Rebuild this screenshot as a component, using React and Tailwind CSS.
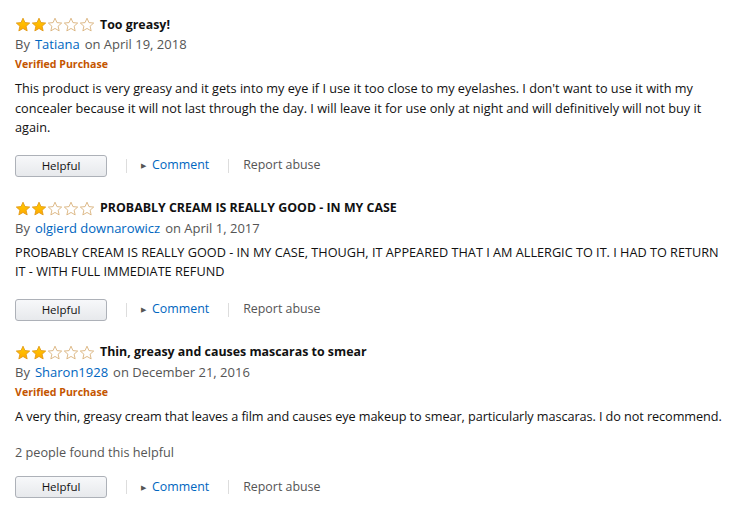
import React from "react";

function Star({ filled }) {
  const d = "M8 1.2 L9.95 5.6 L14.7 6.05 L11.1 9.2 L12.15 13.9 L8 11.45 L3.85 13.9 L4.9 9.2 L1.3 6.05 L6.05 5.6 Z";
  return (
    <svg width="16" height="16" viewBox="0 0 16 16" className="block">
      <defs>
        <linearGradient id="sg" x1="0" y1="0" x2="0" y2="1">
          <stop offset="0" stopColor="#ffce00" />
          <stop offset="1" stopColor="#ffa700" />
        </linearGradient>
      </defs>
      {filled ? (
        <path d={d} fill="url(#sg)" stroke="#e29a17" strokeWidth="0.9" strokeLinejoin="round" />
      ) : (
        <path d={d} fill="#fff" stroke="#d9b27c" strokeWidth="0.9" strokeLinejoin="round" />
      )}
    </svg>
  );
}

function Stars() {
  return (
    <div className="flex">
      {[1, 2, 3, 4, 5].map((i) => (
        <Star key={i} filled={i <= 2} />
      ))}
    </div>
  );
}

function Actions() {
  return (
    <div className="flex items-center h-[22px] text-[12.4px]">
      <button className="w-[92px] h-[22px] rounded-[3px] border border-[#adb1b8] bg-gradient-to-b from-[#f7f8fa] to-[#e7e9ec] text-[11.5px] text-[#111] flex items-center justify-center">
        Helpful
      </button>
      <div className="w-px h-[14px] bg-[#ddd] ml-[19px]" />
      <span className="ml-[14px] text-[#555] text-[7px] leading-none">&#9654;</span>
      <span className="ml-[6px] text-[#0066c0]">Comment</span>
      <div className="w-px h-[14px] bg-[#ddd] ml-[19px]" />
      <span className="ml-[14px] text-[#555]">Report abuse</span>
    </div>
  );
}

function Review({ title, author, date, verified, body, helpful, tight }) {
  return (
    <div>
      <div className="flex items-center h-5">
        <Stars />
        <span className="ml-[5px] font-bold text-[12.4px] text-[#111]">{title}</span>
      </div>
      <div className="h-5 flex items-center text-[#555]">
        By<span className="ml-[5px] text-[#0066c0]">{author}</span>
        <span className="ml-[5px]">on {date}</span>
      </div>
      {verified && (
        <div className="h-5 flex items-center text-[10.6px] font-bold text-[#c45500]">
          Verified Purchase
        </div>
      )}
      <p
        className={
          tight
            ? "mt-[4px] text-[12.7px] leading-[19.5px] text-[#111] tracking-[-0.08px] whitespace-nowrap"
            : "mt-[4px] text-[12.7px] leading-[19.5px] text-[#111]"
        }
      >
        {body}
      </p>
      {helpful && <p className="mt-[16px] text-[12.7px] leading-5 text-[#555]">{helpful}</p>}
      <div className={helpful ? "mt-[14px]" : "mt-[17px]"}>
        <Actions />
      </div>
    </div>
  );
}

export default function App() {
  return (
    <div
      className="w-[732px] h-[509px] bg-white pl-[15px] pr-[5px] pt-[15px] text-[13px] overflow-hidden"
      style={{ fontFamily: '"Open Sans", Arial, sans-serif' }}
    >
      <div className="flex flex-col gap-[22px]">
        <Review
          title="Too greasy!"
          author="Tatiana"
          date="April 19, 2018"
          verified
          body="This product is very greasy and it gets into my eye if I use it too close to my eyelashes. I don't want to use it with my concealer because it will not last through the day. I will leave it for use only at night and will definitively will not buy it again."
        />
        <Review
          title="PROBABLY CREAM IS REALLY GOOD - IN MY CASE"
          author="olgierd downarowicz"
          date="April 1, 2017"
          body="PROBABLY CREAM IS REALLY GOOD - IN MY CASE, THOUGH, IT APPEARED THAT I AM ALLERGIC TO IT. I HAD TO RETURN IT - WITH FULL IMMEDIATE REFUND"
        />
        <Review
          title="Thin, greasy and causes mascaras to smear"
          author="Sharon1928"
          date="December 21, 2016"
          verified
          tight
          body="A very thin, greasy cream that leaves a film and causes eye makeup to smear, particularly mascaras. I do not recommend."
          helpful="2 people found this helpful"
        />
      </div>
    </div>
  );
}
